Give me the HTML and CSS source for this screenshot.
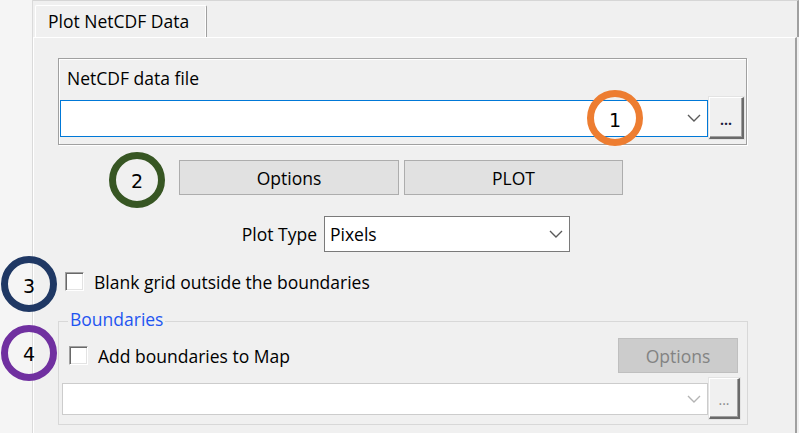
FILE: index.html
```html
<!DOCTYPE html>
<html lang="en">
<head>
<meta charset="utf-8">
<title>Plot NetCDF Data</title>
<link rel="stylesheet" href="styles.css">
</head>
<body>
<div class="side"></div>
<div class="tabctrl">
  <div class="tabstrip">
    <div class="tab">Plot NetCDF Data</div>
  </div>
  <div class="page">
    <div class="group">
      <div class="group-label">NetCDF data file</div>
      <div class="file-row">
        <div class="combo active">
          <svg class="chev" width="14" height="8" viewBox="0 0 14 8"><path d="M1 1 L7 7 L13 1" fill="none" stroke="#5a5a5a" stroke-width="1.4"/></svg>
        </div>
        <div class="browse">...</div>
      </div>
    </div>

    <div class="btn-row">
      <div class="btn btn-options">Options</div>
      <div class="btn btn-plot">PLOT</div>
    </div>

    <div class="type-row">
      <div class="type-label">Plot Type</div>
      <div class="select">
        <span>Pixels</span>
        <svg class="chev" width="14" height="8" viewBox="0 0 14 8"><path d="M1 1 L7 7 L13 1" fill="none" stroke="#5a5a5a" stroke-width="1.4"/></svg>
      </div>
    </div>

    <div class="check-row">
      <span class="check"></span>
      <span class="check-label">Blank grid outside the boundaries</span>
    </div>

    <fieldset class="bounds">
      <legend>Boundaries</legend>
      <div class="add-row">
        <span class="check"></span>
        <span class="check-label">Add boundaries to Map</span>
        <div class="btn btn-disabled">Options</div>
      </div>
      <div class="file-row file-row-2">
        <div class="combo inactive">
          <svg class="chev" width="14" height="8" viewBox="0 0 14 8"><path d="M1 1 L7 7 L13 1" fill="none" stroke="#b4b4b4" stroke-width="1.4"/></svg>
        </div>
        <div class="browse browse-2">...</div>
      </div>
    </fieldset>
  </div>
</div>

<div class="mark mark-1">1</div>
<div class="mark mark-2">2</div>
<div class="mark mark-3">3</div>
<div class="mark mark-4">4</div>
</body>
</html>
```

FILE: styles.css
```css
* { box-sizing: border-box; }

html, body {
  margin: 0;
  padding: 0;
}

body {
  width: 799px;
  height: 433px;
  overflow: hidden;
  position: relative;
  display: flex;
  background: #f0f0f0;
  font-family: "Segoe UI", "Open Sans", "Noto Sans", sans-serif;
  font-size: 17.5px;
  line-height: 24px;
  color: #000;
}

.side {
  width: 33px;
  flex: none;
  background: #f5f5f5;
  border-right: 1px solid #dadada;
}

.tabctrl {
  flex: 1;
  display: flex;
  flex-direction: column;
  min-width: 0;
}

.tabstrip {
  height: 37px;
  flex: none;
  border-top: 1px solid #d6d6d6;
  border-right: 2px solid #a0a0a0;
  display: flex;
  align-items: flex-end;
}

.tab {
  margin-left: 2px;
  width: 172px;
  height: 32px;
  padding: 3px 0 0 12px;
  border-top: 1px solid #fff;
  border-left: 1px solid #fff;
  border-right: 1px solid #a0a0a0;
  box-shadow: inset -1px 0 0 #fff;
  border-radius: 2px 2px 0 0;
  background: #f0f0f0;
  white-space: nowrap;
}

.page {
  flex: 1;
  margin-right: 2px;
  border-top: 1px solid #fff;
  border-left: 1px solid #fff;
  border-right: 2px solid #a0a0a0;
  display: flex;
  flex-direction: column;
  align-items: stretch;
}

/* NetCDF data file group */
.group {
  margin: 20px 48px 0 24px;
  height: 87px;
  padding: 7px 2px 5px 1px;
  border: 1px solid #a0a0a0;
  box-shadow: inset 1px 1px 0 #fff, 1px 1px 0 #fff;
}

.group-label {
  padding-left: 7px;
  height: 24px;
}

.file-row {
  margin-top: 7px;
  height: 42px;
  display: flex;
  align-items: center;
  gap: 1px;
}

.combo {
  flex: 1;
  height: 37px;
  background: #fff;
  display: flex;
  align-items: center;
  justify-content: flex-end;
  padding-right: 6px;
}

.combo.active { border: 1px solid #0078d7; }
.combo.inactive { border: 1px solid #cccccc; height: 32px; }

.chev { display: block; }

.browse {
  width: 35px;
  height: 42px;
  background: #f0f0f0;
  border-top: 1px solid #fff;
  border-left: 1px solid #fff;
  border-right: 2px solid #6a6a6a;
  border-bottom: 2px solid #6a6a6a;
  box-shadow: inset -1px -1px 0 #a0a0a0, 0 0 0 1px #e3e3e3;
  display: flex;
  align-items: center;
  justify-content: center;
  padding-top: 4px;
  font-weight: bold;
  font-size: 14px;
  color: #1a1a3a;
}

.browse-2 {
  width: 31px;
  height: 41px;
  color: #8a8a8a;
  font-weight: normal;
}

/* Buttons */
.btn-row {
  margin-top: 15px;
  padding-left: 145px;
  display: flex;
  gap: 5px;
}

.btn {
  height: 35px;
  background: #e1e1e1;
  border: 1px solid #adadad;
  display: flex;
  align-items: center;
  justify-content: center;
}

.btn-options { width: 220px; }
.btn-plot { width: 219px; }

/* Plot type */
.type-row {
  margin-top: 21px;
  padding-left: 145px;
  display: flex;
  align-items: center;
}

.type-label {
  width: 138px;
  text-align: right;
  margin-right: 7px;
}

.select {
  width: 246px;
  height: 36px;
  background: #fff;
  border: 1px solid #7a7a7a;
  display: flex;
  align-items: center;
  justify-content: space-between;
  padding: 0 6px 0 5px;
}

/* Check rows */
.check-row {
  margin-top: 20px;
  margin-left: 31px;
  height: 19px;
  display: flex;
  align-items: center;
}

.check {
  flex: none;
  width: 19px;
  height: 19px;
  background: #fff;
  border: 1px solid;
  border-color: #a0a0a0 #fff #fff #a0a0a0;
  box-shadow: inset 1px 1px 0 #696969, inset -1px -1px 0 #e3e3e3;
}

.check-label {
  margin-left: 10px;
  white-space: nowrap;
}

/* Boundaries */
.bounds {
  margin: 16px 47px 0 24px;
  padding: 0 4px 5px 3px;
  border: 1px solid #d8d8d8;
  min-width: 0;
}

.bounds legend {
  margin-left: 6px;
  padding: 0 2px 5px;
  color: #1f55f0;
  line-height: 24px;
}

.add-row {
  margin-top: 2px;
  height: 35px;
  display: flex;
  align-items: center;
  padding-left: 7px;
}

.btn-disabled {
  margin-left: auto;
  margin-right: 5px;
  width: 120px;
  background: #cccccc;
  border-color: #bfbfbf;
  color: #838383;
}

.file-row-2 {
  margin-top: 5px;
  height: 41px;
  padding-right: 3px;
}

/* Annotation circles */
.mark {
  position: absolute;
  width: 56px;
  height: 56px;
  border-radius: 50%;
  border: 7px solid;
  display: flex;
  align-items: center;
  justify-content: center;
  font-family: "DejaVu Sans", "Liberation Sans", sans-serif;
  font-size: 19px;
  color: #000;
}

.mark-1 { left: 587px; top: 90px; border-color: #ed7d31; padding-top: 4px; }
.mark-2 { left: 109px; top: 152px; border-color: #375623; padding-top: 2px; }
.mark-3 { left: 1px; top: 256px; border-color: #1f3864; padding-top: 4px; }
.mark-4 { left: 1px; top: 325px; border-color: #7030a0; padding-top: 2px; }
```
